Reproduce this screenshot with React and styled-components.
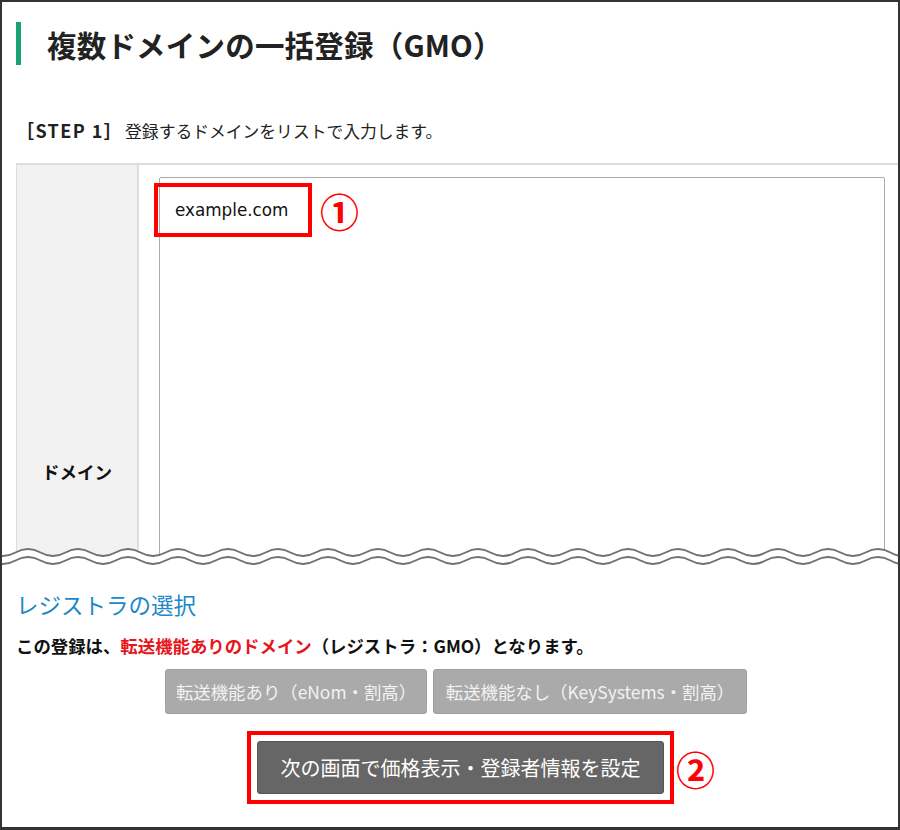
import React from "react";
import styled, { createGlobalStyle } from "styled-components";

const Global = createGlobalStyle`
  html, body { margin: 0; padding: 0; background: #fff; }
  body { font-family: "Noto Sans CJK JP", "Noto Sans", sans-serif; color: #222; }
  * { box-sizing: border-box; }
`;

const Frame = styled.div`
  width: 900px;
  height: 830px;
  border: 2px solid #333;
  border-bottom-width: 3px;
  background: #fff;
  overflow: hidden;
  display: flex;
  flex-direction: column;
`;

const Heading = styled.h1`
  margin: 20px 0 0 14px;
  height: 43px;
  border-left: 5px solid #1aa276;
  padding-left: 26px;
  display: flex;
  align-items: center;
  font-size: 29.5px;
  font-weight: 700;
  color: #222;
  letter-spacing: 0.2px;
`;

const StepLine = styled.p`
  margin: 53px 0 0 14px;
  line-height: 24px;
  font-size: 16.8px;
  color: #222;
`;

const StepLabel = styled.b`
  font-size: 18px;
  font-weight: 700;
  letter-spacing: 1.4px;
  margin-right: 2px;
`;

const TornClip = styled.div`
  position: relative;
  height: 404px;
  margin-top: 20px;
  padding-left: 14px;
  overflow: hidden;
`;

const Table = styled.div`
  display: grid;
  grid-template-columns: 123px 1fr;
  height: 614px;
  border-top: 2px solid #ddd;
`;

const LabelCell = styled.div`
  background: #f2f2f2;
  border-left: 1px solid #ddd;
  border-right: 2px solid #ddd;
  display: flex;
  align-items: center;
  justify-content: center;
  font-size: 17.5px;
  font-weight: 700;
  color: #111;
`;

const InputCell = styled.div`
  padding: 12px 13px 0 20px;
`;

const FieldWrap = styled.div`
  position: relative;
`;

const DomainArea = styled.textarea`
  display: block;
  width: 100%;
  height: 580px;
  border: 1px solid #aaa;
  border-radius: 2px;
  padding: 20px 15px;
  font-family: "DejaVu Sans", "Noto Sans CJK JP", sans-serif;
  font-size: 16.8px;
  line-height: 24px;
  color: #111;
  resize: none;
  outline: none;
  background: #fff;
`;

const RedBox = styled.div`
  position: absolute;
  left: ${(p) => p.$left}px;
  top: ${(p) => p.$top}px;
  width: ${(p) => p.$w}px;
  height: ${(p) => p.$h}px;
  border: 4px solid #f00;
  pointer-events: none;
`;

const Marker = styled.span`
  position: absolute;
  left: ${(p) => p.$left};
  top: ${(p) => p.$top};
  font-family: "Noto Sans CJK JP", sans-serif;
  font-size: 39px;
  font-weight: 700;
  line-height: 1;
  color: #f00;
  transform: ${(p) => p.$shift || "none"};
`;

const WaveSvg = styled.svg`
  position: absolute;
  left: 0;
  bottom: 0;
  display: block;
`;

const SectionTitle = styled.h2`
  margin: 22px 0 0 14px;
  font-size: 22.5px;
  line-height: 30px;
  font-weight: 400;
  color: #1b88c7;
`;

const Note = styled.p`
  margin: 14px 0 0 14px;
  font-size: 17.4px;
  line-height: 26px;
  font-weight: 700;
  color: #111;
`;

const Emph = styled.span`
  color: #e8141b;
`;

const ChoiceRow = styled.div`
  display: flex;
  justify-content: center;
  gap: 6px;
  margin-top: 10px;
  padding-left: 12px;
`;

const ChoiceButton = styled.button`
  width: ${(p) => p.$w}px;
  height: 45px;
  background: #aaa;
  border: 1px solid #a0a0a0;
  border-radius: 3px;
  color: #f2f2f2;
  font-family: "Noto Sans CJK JP", sans-serif;
  font-size: 17.4px;
  padding: 0;
  display: flex;
  align-items: center;
  justify-content: center;
`;

const SubmitRow = styled.div`
  display: flex;
  justify-content: center;
  margin-top: 17px;
  padding-left: 21px;
`;

const Highlight = styled.div`
  position: relative;
  border: 4px solid #f00;
  padding: 6px;
`;

const SubmitButton = styled.button`
  width: 407px;
  height: 53px;
  background: #666;
  border: 1px solid #555;
  border-radius: 3px;
  color: #fff;
  font-family: "Noto Sans CJK JP", sans-serif;
  font-size: 20px;
  padding: 0;
  display: flex;
  align-items: center;
  justify-content: center;
`;

function wavePath(y) {
  let d = `M -36.5 ${y} q 12.5 -7 25 0`;
  for (let i = 0; i < 40; i++) d += " t 25 0";
  return d;
}

function Wave() {
  const top = wavePath(13.5);
  return (
    <WaveSvg width="896" height="28" viewBox="0 0 896 28">
      <path d={`${top} L 960 28 L -40 28 Z`} fill="#fff" />
      <path d={top} fill="none" stroke="#707070" strokeWidth="2" />
      <path d={wavePath(21.5)} fill="none" stroke="#707070" strokeWidth="2" />
    </WaveSvg>
  );
}

export default function App() {
  return (
    <>
      <Global />
      <Frame>
        <Heading>複数ドメインの一括登録（GMO）</Heading>
        <StepLine>
          <StepLabel>［STEP 1］</StepLabel>登録するドメインをリストで入力します。
        </StepLine>
        <TornClip>
          <Table>
            <LabelCell>ドメイン</LabelCell>
            <InputCell>
              <FieldWrap>
                <DomainArea readOnly value="example.com" />
                <RedBox $left={-5} $top={6} $w={158} $h={54} />
                <Marker $left="161px" $top="14px">①</Marker>
              </FieldWrap>
            </InputCell>
          </Table>
          <Wave />
        </TornClip>
        <SectionTitle>レジストラの選択</SectionTitle>
        <Note>
          この登録は、<Emph>転送機能ありのドメイン</Emph>（レジストラ：GMO）となります。
        </Note>
        <ChoiceRow>
          <ChoiceButton $w={262}>転送機能あり（eNom・割高）</ChoiceButton>
          <ChoiceButton $w={314}>転送機能なし（KeySystems・割高）</ChoiceButton>
        </ChoiceRow>
        <SubmitRow>
          <Highlight>
            <SubmitButton>次の画面で価格表示・登録者情報を設定</SubmitButton>
            <Marker $left="calc(100% + 6px)" $top="50%" $shift="translateY(-50%)">②</Marker>
          </Highlight>
        </SubmitRow>
      </Frame>
    </>
  );
}
